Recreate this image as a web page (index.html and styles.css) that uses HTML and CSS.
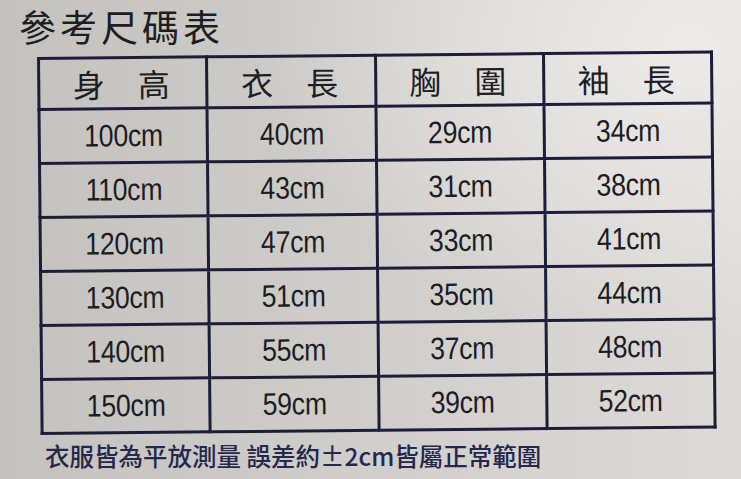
FILE: index.html
```html
<!DOCTYPE html>
<html lang="zh-Hant">
<head>
<meta charset="utf-8">
<title>參考尺碼表</title>
<link rel="stylesheet" href="styles.css">
</head>
<body>
<div class="page">
  <h1 class="title">參考尺碼表</h1>
  <table class="chart">
    <thead>
      <tr>
        <th><span class="hd"><span>身</span><span>高</span></span></th>
        <th><span class="hd"><span>衣</span><span>長</span></span></th>
        <th><span class="hd"><span>胸</span><span>圍</span></span></th>
        <th><span class="hd"><span>袖</span><span>長</span></span></th>
      </tr>
    </thead>
    <tbody>
      <tr><td><span class="num">100cm</span></td><td><span class="num">40cm</span></td><td><span class="num">29cm</span></td><td><span class="num">34cm</span></td></tr>
      <tr><td><span class="num">110cm</span></td><td><span class="num">43cm</span></td><td><span class="num">31cm</span></td><td><span class="num">38cm</span></td></tr>
      <tr><td><span class="num">120cm</span></td><td><span class="num">47cm</span></td><td><span class="num">33cm</span></td><td><span class="num">41cm</span></td></tr>
      <tr><td><span class="num">130cm</span></td><td><span class="num">51cm</span></td><td><span class="num">35cm</span></td><td><span class="num">44cm</span></td></tr>
      <tr><td><span class="num">140cm</span></td><td><span class="num">55cm</span></td><td><span class="num">37cm</span></td><td><span class="num">48cm</span></td></tr>
      <tr><td><span class="num">150cm</span></td><td><span class="num">59cm</span></td><td><span class="num">39cm</span></td><td><span class="num">52cm</span></td></tr>
    </tbody>
  </table>
  <p class="note">衣服皆為平放測量 誤差約±2cm皆屬正常範圍</p>
</div>
</body>
</html>
```
FILE: styles.css
```css
html, body {
  margin: 0;
  padding: 0;
}
body {
  width: 741px;
  height: 479px;
  overflow: hidden;
  background:
    radial-gradient(ellipse 420px 300px at 690px 40px, #ecebe9 0%, rgba(236,235,233,0) 100%),
    linear-gradient(90deg, #c4c2bf 0%, #cfcdca 45%, #dcdbd8 100%);
  font-family: "Noto Sans CJK TC", "Noto Sans CJK SC", sans-serif;
  color: #1c1c22;
}
.page {
  padding: 3px 0 0 19px;
}
.title {
  margin: 0;
  font-family: "Noto Sans CJK TC", sans-serif;
  font-weight: 400;
  font-size: 37px;
  line-height: 46px;
  letter-spacing: 4px;
  color: #1d1d22;
}
.chart {
  margin: 8px 0 0 18px;
  width: 676px;
  border-collapse: collapse;
  table-layout: fixed;
  border: 3px solid #1b1e36;
  transform: rotate(-0.55deg);
  transform-origin: left top;
}
.chart th, .chart td {
  border: 3px solid #1b1e36;
  text-align: center;
  padding: 0;
}
.chart th {
  height: 48px;
  font-weight: 400;
  font-size: 32px;
  color: #1e1e26;
}
.hd {
  display: inline-flex;
  gap: 33px;
  line-height: 1;
  padding-right: 3px;
}
.chart td {
  height: 51px;
  font-family: "Liberation Sans", sans-serif;
  font-size: 31px;
  color: #1c1c22;
}
.num {
  display: inline-block;
  transform: scaleX(0.86);
  letter-spacing: -0.3px;
}
.note {
  margin: 5px 0 0 26px;
  font-family: "Noto Sans CJK TC", sans-serif;
  font-weight: 500;
  font-size: 24.5px;
  line-height: 32px;
  color: #25274c;
}
```
